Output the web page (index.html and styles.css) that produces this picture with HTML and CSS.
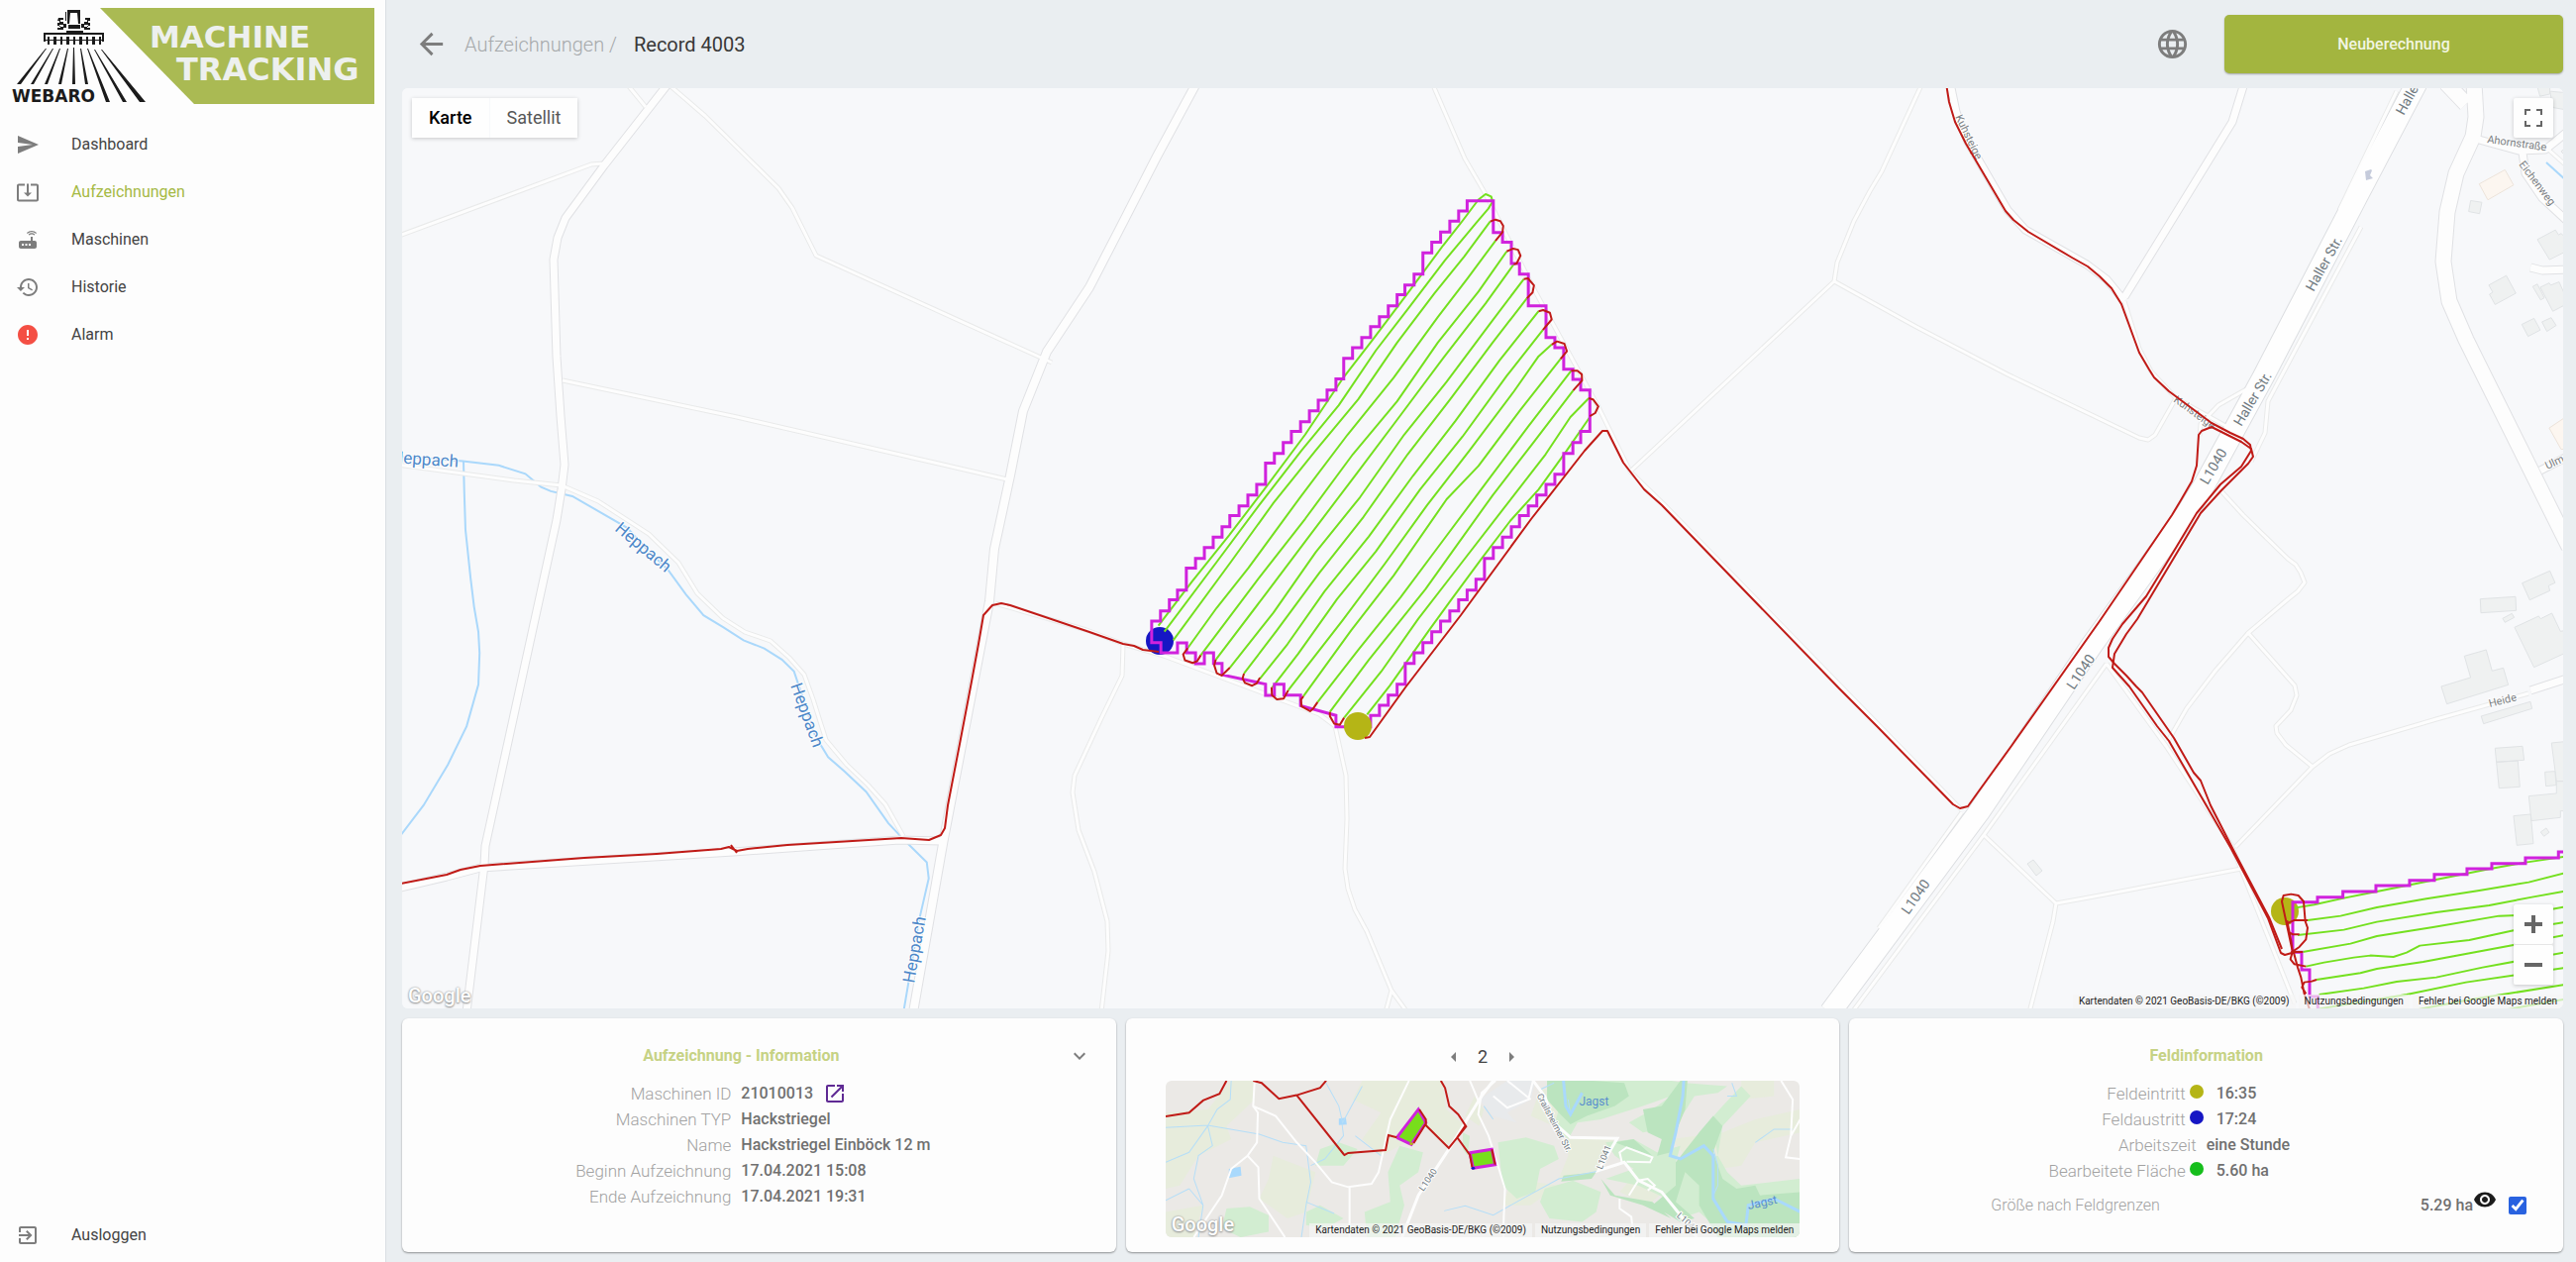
FILE: index.html
```html
<!DOCTYPE html>
<html lang="de">
<head>
<meta charset="utf-8">
<title>Record 4003 – Machine Tracking</title>
<link rel="stylesheet" href="styles.css">
</head>
<body>
<div class="app">
  <aside class="sidebar">
    <a class="logo" href="#" aria-label="Webaro Machine Tracking">
      <svg viewBox="0 0 378 106" width="378" height="106">
        <path class="logo-panel" d="M101 8H378V105H196z"/>
        <g class="logo-word">
          <text x="151" y="48">MACHINE</text>
          <text class="logo-word-wide" x="178" y="81">TRACKING</text>
        </g>
        <text class="logo-brand" x="12" y="103">WEBARO</text>
        <g class="logo-ink">
          <path d="M46 49L17 85H21L47 49zM53 49L31 85H34L54 49zM60 49L45 85H48L61 49zM68 49L59 85H62L69 49zM74 48L73 85H76L75 48zM81 49L86 85H89L82 49zM88 49L107 103H111L89 49zM95 50L124 103H128L96 50zM102 50L141 103H147L103 50z"/>
          <path fill-rule="evenodd" d="M44 33H105V42H103V35H46V42H44zM67 31H84V33H67zM68 10H81V24H79L78 13H71L70 24H68zM66 12H67V21H66zM69 25H81V29H69z"/>
          <path d="M59 18H64V20H61V22H64V25H60V27H64V30H58V28H61V26H58V23H60V21H58zM91 18H86V20H88V22H85V25H89V27H85V30H91V28H88V26H91V23H89V21H91zM64 24H67V28H64zM82 24H85V28H82z"/>
          <path d="M48 37H50V45H48zM54 37H57V45H54zM61 37H63V45H61zM67 37H70V45H67zM74 37H76V45H74zM80 37H83V45H80zM87 37H89V45H87zM93 37H96V45H93zM100 37H102V45H100zM46 40H104V41H46z"/>
        </g>
      </svg>
    </a>
    <nav class="nav">
      <a class="nav-item" href="#"><svg class="icon" viewBox="0 0 24 24"><path d="M2.01 21L23 12 2.01 3 2 10l15 2-15 2z"/></svg>Dashboard</a>
      <a class="nav-item nav-item-active" href="#"><svg class="icon" viewBox="0 0 24 24"><path d="M12 16.5l4-4h-3v-9h-2v9H8l4 4zm9-13h-6v1.99h6v14.03H3V5.49h6V3.5H3c-1.1 0-2 .9-2 2v14c0 1.1.9 2 2 2h18c1.1 0 2-.9 2-2v-14c0-1.1-.9-2-2-2z"/></svg>Aufzeichnungen</a>
      <a class="nav-item" href="#"><svg class="icon" viewBox="0 0 24 24"><path d="M20.2 5.9l.8-.8C19.6 3.7 17.8 3 16 3s-3.6.7-5 2.1l.8.8C13 4.8 14.5 4.2 16 4.2s3 .6 4.2 1.7zm-.9.8c-.9-.9-2.1-1.4-3.3-1.4s-2.4.5-3.3 1.4l.8.8c.7-.7 1.6-1 2.5-1 .9 0 1.8.3 2.5 1l.8-.8zM19 13h-2V9h-2v4H5c-1.1 0-2 .9-2 2v4c0 1.1.9 2 2 2h14c1.1 0 2-.9 2-2v-4c0-1.1-.9-2-2-2zM8 18H6v-2h2v2zm3.5 0h-2v-2h2v2zm3.5 0h-2v-2h2v2z"/></svg>Maschinen</a>
      <a class="nav-item" href="#"><svg class="icon" viewBox="0 0 24 24"><path d="M13 3c-4.97 0-9 4.03-9 9H1l3.89 3.89.07.14L9 12H6c0-3.87 3.13-7 7-7s7 3.13 7 7-3.13 7-7 7c-1.93 0-3.68-.79-4.94-2.06l-1.42 1.42C8.27 19.99 10.51 21 13 21c4.97 0 9-4.03 9-9s-4.03-9-9-9zm-1 5v5l4.28 2.54.72-1.21-3.5-2.08V8H12z"/></svg>Historie</a>
      <a class="nav-item" href="#"><svg class="icon icon-alarm" viewBox="0 0 24 24"><path d="M12 2C6.48 2 2 6.48 2 12s4.48 10 10 10 10-4.48 10-10S17.52 2 12 2zm1 15h-2v-2h2v2zm0-4h-2V7h2v6z"/></svg>Alarm</a>
    </nav>
    <button class="nav-item nav-logout" type="button"><svg class="icon" viewBox="0 0 24 24"><path d="M10.09 15.59L11.5 17l5-5-5-5-1.41 1.41L12.67 11H3v2h9.67l-2.58 2.59zM19 3H5c-1.11 0-2 .9-2 2v4h2V5h14v14H5v-4H3v4c0 1.1.89 2 2 2h14c1.1 0 2-.9 2-2V5c0-1.1-.9-2-2-2z"/></svg>Ausloggen</button>
  </aside>

  <main class="main">
    <header class="topbar">
      <button class="icon-button" type="button" aria-label="Zurück"><svg class="icon icon-large" viewBox="0 0 24 24"><path d="M20 11H7.83l5.59-5.59L12 4l-8 8 8 8 1.41-1.41L7.83 13H20v-2z"/></svg></button>
      <a class="crumb" href="#">Aufzeichnungen /</a>
      <h1 class="page-title">Record 4003</h1>
      <button class="icon-button language" type="button" aria-label="Sprache"><svg class="icon icon-large" viewBox="0 0 24 24"><path d="M11.99 2C6.47 2 2 6.48 2 12s4.47 10 9.99 10C17.52 22 22 17.52 22 12S17.52 2 11.99 2zm6.93 6h-2.95c-.32-1.25-.78-2.45-1.38-3.56 1.84.63 3.37 1.91 4.33 3.56zM12 4.04c.83 1.2 1.48 2.53 1.91 3.96h-3.82c.43-1.43 1.08-2.76 1.91-3.96zM4.26 14C4.1 13.36 4 12.69 4 12s.1-1.36.26-2h3.38c-.08.66-.14 1.32-.14 2 0 .68.06 1.34.14 2H4.26zm.82 2h2.95c.32 1.25.78 2.45 1.38 3.56-1.84-.63-3.37-1.9-4.33-3.56zm2.95-8H5.08c.96-1.66 2.49-2.93 4.33-3.56C8.81 5.55 8.35 6.75 8.03 8zM12 19.96c-.83-1.2-1.48-2.53-1.91-3.96h3.82c-.43 1.43-1.08 2.76-1.91 3.96zM14.34 14H9.66c-.09-.66-.16-1.32-.16-2 0-.68.07-1.35.16-2h4.68c.09.65.16 1.32.16 2 0 .68-.07 1.34-.16 2zm.25 5.56c.6-1.11 1.06-2.31 1.38-3.56h2.95c-.96 1.65-2.49 2.93-4.33 3.56zM16.36 14c.08-.66.14-1.32.14-2 0-.68-.06-1.34-.14-2h3.38c.16.64.26 1.31.26 2s-.1 1.36-.26 2h-3.38z"/></svg></button>
      <button class="primary-button" type="button">Neuberechnung</button>
    </header>

    <section class="map" aria-label="Karte">
      <svg class="map-canvas" viewBox="406 89 2182 929" preserveAspectRatio="xMidYMid slice">
        <defs>
          <g id="paths">
            <path d="M400 469L519 485 567 490 604 506 655 539 685 568 704 599 730 624 752 638 778 647 797 664 812 681 821 706 834 747 855 772 876 792 894 812 912 844"/>
            <path d="M568 384L744 421 1017 484"/>
            <path d="M400 239L597 166 610 165"/>
            <path d="M634 86L652 108M676 86L712 117 786 190 800 210 824 258 1062 366"/>
            <path d="M1447 86L1479 160 1500 196 1550 294 1614 411 1646 476 1680 509 1860 694 1981 818"/>
            <path d="M1647 475L1852 284 1855 265 1872 223 1888 193 1900 173 1940 86"/>
            <path d="M1852 284L1935 330 2027 378 2160 442 2169 444 2176 439 2197 402"/>
            <path d="M1005 609L1097 636 1134 650 1175 662 1332 721 1348 733 1359 783 1360 827 1358 877 1361 897 1368 918 1380 940 1405 1000 1399 1022M1405 1000L1421 1022"/>
            <path d="M1134 650L1133 682 1112 725 1085 783 1083 800 1089 838 1105 880 1118 930 1119 960 1112 1022"/>
            <path d="M2384 229L2290 405 2287 437 2273 466M2127 670L2003 843 1870 1022M1981 820L1897 937"/>
            <path d="M2003 843L2076 912 2073 930 2049 1022M2076 912L2120 904 2263 877"/>
            <path d="M2127 670L2187 753 2253 853 2317 1013"/>
            <path d="M2257 855L2335 774 2352 761 2372 752 2460 726 2553 700"/>
            <path d="M2335 774L2308 752 2299 740 2298 733 2313 717 2319 702 2317 692 2270 639 2310 605 2320 597 2327 588 2323 578 2318 570 2310 564 2265 520 2243 496"/>
            <path d="M2270 639L2237 677 2208 715 2189 748"/>
            <path d="M2145 304L2160 352 2172 375 2197 402 2260 437M2268 393L2240 409 2222 428 2221 440"/>
            <path d="M2420 92L2362 212M2572 150L2590 166"/>
          </g>
          <g id="lanes">
            <path d="M675 84L610 167 571 220 563 240 559 262 562 360 566 420 570 469 567 494 562 525 490 854 489 873 471 1022"/>
            <path d="M400 897L451 885 485 876 740 860 908 848 950 849"/>
            <path d="M2266 84L2254 123 2145 300"/>
            <path d="M1969 84L1975 113 1987 143 2027 212 2045 232 2107 267 2127 282 2145 304"/>
            <path d="M2503 141L2543 152 2570 151 2580 143 2592 133M2547 154L2550 175 2567 200 2592 223M2555 270L2567 273 2592 272M2565 475L2592 461M2555 697L2592 685"/>
          </g>
          <g id="streets">
            <path d="M1208 84L1168 158 1130 232 1100 290 1057 355 1033 415 1020 480 1004 554 999 607 952 852 922 1022"/>
          </g>
          <g id="avenues">
            <path d="M2498 84L2500 118 2497 138 2480 175 2471 214 2467 264 2473 304 2490 343 2594 552M2470 84L2490 105"/>
          </g>
          <g id="highway">
            <path d="M2440 84L2380 198 2286 379 2226 489 2207 520 2113 650 1998 820 1848 1022"/>
          </g>
        </defs>

        <rect class="ground" x="0" y="0" width="3000" height="1400"/>
        <g class="building" transform="translate(2100 0) scale(.3333 .3571)">
          <path class="shop" d="M1210 520L1288 480 1314 523 1236 565zM1422 1210L1470 1180V1270H1458z"/>
          <path d="M1184 567L1218 572 1211 604 1178 598zM1386 677L1441 650 1450 664 1458 660 1470 670V712L1423 734zM1239 806L1292 779 1321 829 1258 861 1241 832 1251 826zM1372 810L1386 803 1407 842 1396 848zM1395 812L1422 800 1427 806 1452 797 1470 835V862L1433 880zM1339 917L1376 900 1395 933 1358 951zM1400 910L1428 898 1443 920 1415 937zM1386 245H1424V266L1394 272zM1424 258L1470 262V310L1434 304zM1458 428L1470 418V440z"/>
        </g>
        <g class="building" transform="translate(2100 520) scale(.3333)">
          <path d="M1340 206L1424 169 1440 205 1420 214 1424 229 1363 257zM1213 254L1320 247 1322 289 1215 296zM1281 313L1309 298 1316 310 1288 325zM1317 340L1390 306 1396 314 1430 297 1456 352 1470 350V418L1376 461zM1165 427L1231 408 1249 472 1283 463 1298 514 1112 572 1095 519 1184 492zM1216 609L1365 565 1370 586 1223 632zM1258 706L1341 700 1346 742 1262 748zM1262 748L1327 744 1333 823 1270 827zM1429 690L1470 686V806H1444zM1409 778L1440 776 1443 818 1412 821zM1360 851L1444 843V806H1470V896H1456V916L1368 926zM1314 911L1366 906 1374 995 1324 1000zM1396 960L1413 948 1422 961 1406 973z"/>
        </g>
        <path class="building" d="M2047 872L2053 868 2062 879 2056 884z"/>
        <path class="water" d="M2571 164L2592 183"/>
        <g class="water" transform="translate(400 420) scale(.3954 .389)">
          <path d="M0 105L60 108 170 117 262 128 330 150 370 184 395 195 450 208 590 290 640 345 695 400 740 463 785 517 835 548 887 582 940 603 985 632 1016 663 1040 735 1070 830 1103 885 1145 922 1200 975 1257 1057 1300 1103 1355 1158 1360 1200 1335 1310 1295 1550"/>
          <path d="M172 118L174 200 177 295 190 420 199 495 210 560 213 615 210 697 180 805 132 905 70 1010 10 1090"/>
        </g>

        <use class="paths-edge" href="#paths"/><use class="lanes-edge" href="#lanes"/><use class="streets-edge" href="#streets"/><use class="avenues-edge" href="#avenues"/><use class="highway-edge" href="#highway"/>
        <use class="paths-fill" href="#paths"/><use class="lanes-fill" href="#lanes"/><use class="streets-fill" href="#streets"/><use class="avenues-fill" href="#avenues"/><use class="highway-fill" href="#highway"/>
        <path class="oneway" d="M2394 171L2388 173 2389 182 2396 180 2393 177 2395 172z"/>

        <g class="label-water">
          <text x="395" y="467" transform="rotate(4 395 467)">Heppach</text>
          <text x="620" y="535" transform="rotate(40 620 535)">Heppach</text>
          <text x="798" y="692" transform="rotate(70 798 692)">Heppach</text>
          <text x="923" y="993" transform="rotate(-80 923 993)">Heppach</text>
        </g>
        <g class="label-road">
          <text x="2336" y="295" transform="rotate(-61 2336 295)">Haller Str.</text>
          <text x="2263" y="431" transform="rotate(-59 2263 431)">Haller Str.</text>
          <text x="2427" y="117" transform="rotate(-61 2427 117)">Haller Str.</text>
          <text x="2229" y="490" transform="rotate(-59 2229 490)">L1040</text>
          <text x="2094" y="697" transform="rotate(-56 2094 697)">L1040</text>
          <text x="1927" y="924" transform="rotate(-55 1927 924)">L1040</text>
        </g>
        <g class="label-street">
          <text x="2194" y="405" transform="rotate(36 2194 405)">Kuhsteige</text>
          <text x="1974" y="118" transform="rotate(64 1974 118)">Kuhsteige</text>
          <text x="2511" y="144" transform="rotate(8 2511 144)">Ahornstraße</text>
          <text x="2543" y="166" transform="rotate(53 2543 166)">Eichenweg</text>
          <text x="2572" y="474" transform="rotate(-25 2572 474)">Ulm</text>
          <text x="2514" y="714" transform="rotate(-14 2514 714)">Heide</text>
        </g>

        <circle class="exit" cx="1171" cy="647" r="14"/>
        <circle class="entry" cx="2307" cy="920" r="14"/>
        <g transform="translate(1100 160) scale(.3571 .3954)">
          <g class="rows">
            <path d="M195 1193L290 1080 395 962 500 838 610 705 716 562 800 464 905 338 1000 222 1050 165 1100 105 1120 91 1136 97 1140 110 1128 128 1095 163 1070 190 1005 260 900 385 810 490 705 630 600 745 480 885 360 1030 212 1208"/>
            <path d="M1133 161L1060 250 975 345 870 470 760 615 640 745 520 880 400 1030 237 1230"/>
            <path d="M1148 210L1070 305 985 405 860 560 730 705 600 860 450 1045 360 1147 278 1250"/>
            <path d="M1180 237L1100 340 985 470 870 620 745 755 610 920 480 1070 315 1268"/>
            <path d="M1200 270L1120 370 1000 510 880 655 755 805 625 960 500 1110 357 1280"/>
            <path d="M1228 308L1130 425 1010 570 890 705 765 865 640 1005 520 1160 397 1300"/>
            <path d="M1237 357L1140 470 1020 615 900 755 775 915 650 1058 530 1205 437 1315"/>
            <path d="M1270 390L1160 515 1035 670 915 810 790 965 665 1105 560 1240 482 1328"/>
            <path d="M1282 438L1180 555 1055 710 935 845 810 1003 700 1125 590 1265 517 1350"/>
            <path d="M1307 475L1270 505 1200 595 1075 745 955 885 835 1035 715 1180 562 1358"/>
            <path d="M1332 512L1220 640 1100 785 1010 870 860 1065 740 1205 605 1373"/>
            <path d="M1362 542L1240 685 1120 830 1000 975 880 1120 760 1255 645 1388"/>
            <path d="M1368 592L1260 720 1140 860 1025 1005 950 1100 790 1280 680 1413"/>
            <path d="M1412 612L1360 660 1290 755 1170 895 1050 1035 930 1175 825 1310 720 1428"/>
            <path d="M1415 660L1350 745 1270 845 1190 925 1110 1020 1020 1130 960 1205 850 1345 785 1420"/>
          </g>
          <path class="border" d="M1142 108H1068V134H1044V160H1019V188H993V214H968V241H943V295H918V323H892V348H870V376H845V404H820V429H795V457H770V483H744V510H719V563H697V591H672V617H647V644H622V672H597V697H571V725H548V753H523V778H498V832H473V859H448V887H423V912H397V940H375V967H350V993H325V1021H300V1046H274V1102H249V1127H226V1155H201V1181H176V1236H202V1262H249V1237H275V1262H300V1290H325V1262H351V1289H375V1318L498 1342V1371H523V1342H550V1370H597V1397L697 1422V1451H795V1422H820V1396H845V1370H870V1342H893V1289H918V1262H943V1236H968V1208H993V1181H1019V1155H1044V1127H1068V1102H1093V1074H1117V1021H1142V993H1168V967H1193V940H1216V912H1241V887H1265V859H1291V832H1316V806H1341V753H1367V725H1389V697H1415V591H1389V564H1367V538H1341V483H1316V457H1291V376H1241V295H1216V268H1193V214H1168V189H1142z"/>
          <g class="track">
            <path d="M1133 161L1148 156 1162 160 1170 172 1168 188 1148 210M1180 237L1198 230 1212 233 1219 248 1208 268 1200 270M1228 308L1240 306 1257 324 1253 342 1237 357M1270 390L1283 387 1302 394 1307 411 1282 438M1307 475L1322 467 1343 473 1350 492 1332 512M1362 542L1380 542 1392 551 1393 567 1368 592M1412 612L1424 615 1439 633 1430 650 1415 658"/>
            <path d="M278 1250L265 1266 270 1281 292 1288 305 1283 315 1268M357 1280L353 1294 360 1314 374 1320 397 1300M437 1315L433 1327 440 1339 460 1346 473 1340 482 1326M515 1350L516 1370 530 1381 549 1379 562 1358M605 1373L598 1382 600 1399 624 1411 633 1404 645 1388M680 1413L680 1424 692 1443 708 1446 720 1428"/>
          </g>
        </g>
        <circle class="entry" cx="1371" cy="733" r="14"/>
        <g transform="translate(2100 520) scale(.3333)">
          <path class="rows" d="M650 1190L710 1180 800 1160 900 1140 1075 1105 1240 1072 1350 1052 1470 1034M690 1227L790 1214 900 1188 1050 1162 1210 1137 1360 1112 1470 1084M660 1272L800 1256 900 1232 1080 1203 1240 1182 1370 1157 1470 1139M675 1323L820 1298 900 1275 1070 1248 1270 1214 1330 1212 1470 1186M685 1367L740 1355 830 1340 880 1334 950 1338 990 1325 1030 1304 1180 1287 1314 1258 1470 1233M717 1407L850 1387 900 1374 1040 1353 1314 1302 1470 1272M725 1452L860 1433 960 1413 1080 1400 1220 1370 1470 1324M720 1496L990 1452 1170 1415 1470 1371M1010 1500L1180 1468 1470 1422M1280 1500L1470 1466"/>
          <path class="border" d="M1470 1020H1450V1038H1350V1055H1248V1071H1173V1088H1074V1106H999V1122H897V1140H797V1157H720V1172H645V1324H672V1377H696V1458H721V1510"/>
          <path class="track" d="M645 1325L612 1170 617 1152 640 1148 662 1152 678 1170 683 1230 690 1250 685 1285 665 1308 640 1325M628 1228L640 1290 645 1325M632 1235L650 1227H690M632 1262L645 1270H665M640 1323H675M645 1320L638 1345 650 1360 685 1367M648 1325L660 1370 670 1400 680 1450 697 1500M717 1407L703 1412 680 1415 673 1430 685 1450"/>
        </g>
        <g class="track">
          <path d="M400 893L451 883 465 878 485 874 590 866 663 862 728 857 736 855 744 859 755 857 795 853 910 846 938 848 950 843 954 836 957 813 969 751 981 688 988 650 993 621 1002 611 1011 609 1020 611 1100 638 1134 650 1145 652 1154 656 1170 658M738 853l6 8"/>
          <path d="M1378 745L1383 744 1419 694 1475 621 1546 524 1600 455 1618 435 1623 435 1630 449 1639 467 1660 494 1678 510 1765 600 1857 695 1895 733 1972 812 1979 816 1987 814 1997 800 2031 753 2120 627 2193 520 2202 505 2213 486 2218 470 2220 439 2223 435 2233 431 2263 446 2273 453 2275 461 2270 468 2243 495 2222 518 2158 625 2147 640 2135 660 2133 674 2150 693 2178 733 2190 748 2223 805 2253 857 2290 927 2303 962 2307 964 2314 962"/>
          <path d="M1965 84L1968 103 1974 123 1985 145 2025 213 2033 222 2048 234 2092 260 2108 269 2120 279 2132 291 2142 307 2160 356 2170 373 2175 381 2190 395 2233 427 2252 437 2265 443 2272 449 2273 455 2263 471 2242 489 2218 518 2197 553 2167 602 2143 630 2133 645 2129 654 2129 663 2135 670 2147 682 2157 693 2163 699 2195 745 2215 780 2222 788 2232 813 2256 860 2291 926 2304 958"/>
        </g>
      </svg>

      <div class="map-type" role="group" aria-label="Kartentyp">
        <button class="map-type-button map-type-active" type="button">Karte</button>
        <button class="map-type-button" type="button">Satellit</button>
      </div>
      <button class="map-tool map-fullscreen" type="button" aria-label="Vollbild"><svg viewBox="0 0 18 18" width="18" height="18"><path d="M0 0v6h2V2h4V0H0zm16 0h-4v2h4v4h2V0h-2zm0 16h-4v2h6v-6h-2v4zM2 12H0v6h6v-2H2v-4z"/></svg></button>
      <div class="map-zoom">
        <button class="map-tool" type="button" aria-label="Vergrößern"><svg viewBox="0 0 18 18" width="18" height="18"><path d="M18 7h-7V0H7v7H0v4h7v7h4v-7h7z"/></svg></button>
        <button class="map-tool" type="button" aria-label="Verkleinern"><svg viewBox="0 0 18 18" width="18" height="18"><path d="M0 7h18v4H0z"/></svg></button>
      </div>
      <span class="map-brand">Google</span>
      <div class="map-credits"><span>Kartendaten © 2021 GeoBasis-DE/BKG (©2009)</span><a href="#">Nutzungsbedingungen</a><a href="#">Fehler bei Google Maps melden</a></div>
    </section>

    <div class="cards">
      <section class="card">
        <div class="card-head">
          <h2 class="card-title">Aufzeichnung - Information</h2>
          <button class="icon-button card-toggle" type="button" aria-label="Einklappen"><svg class="icon" viewBox="0 0 24 24"><path d="M16.59 8.59L12 13.17 7.41 8.59 6 10l6 6 6-6z"/></svg></button>
        </div>
        <dl class="facts facts-record">
          <div class="fact"><dt>Maschinen ID</dt><dd>21010013 <a class="open-link" href="#" aria-label="Maschine öffnen"><svg class="icon" viewBox="0 0 24 24"><path d="M19 19H5V5h7V3H5c-1.11 0-2 .9-2 2v14c0 1.1.89 2 2 2h14c1.1 0 2-.9 2-2v-7h-2v7zM14 3v2h3.59l-9.83 9.83 1.41 1.41L19 6.41V10h2V3h-7z"/></svg></a></dd></div>
          <div class="fact"><dt>Maschinen TYP</dt><dd>Hackstriegel</dd></div>
          <div class="fact"><dt>Name</dt><dd>Hackstriegel Einböck 12 m</dd></div>
          <div class="fact"><dt>Beginn Aufzeichnung</dt><dd>17.04.2021 15:08</dd></div>
          <div class="fact"><dt>Ende Aufzeichnung</dt><dd>17.04.2021 19:31</dd></div>
        </dl>
      </section>

      <section class="card">
        <div class="pager">
          <button class="icon-button" type="button" aria-label="Vorheriges Feld"><svg class="icon" viewBox="0 0 24 24"><path d="M14 7l-5 5 5 5V7z"/></svg></button>
          <span class="pager-value">2</span>
          <button class="icon-button" type="button" aria-label="Nächstes Feld"><svg class="icon" viewBox="0 0 24 24"><path d="M10 17l5-5-5-5v10z"/></svg></button>
        </div>
        <div class="minimap">
          <svg class="map-canvas" viewBox="0 0 640 158" preserveAspectRatio="xMidYMid slice">
            <rect class="mini-ground" width="640" height="158"/>
            <g transform="scale(.472 .3333) translate(-100 -243)">
              <path class="mini-meadow" d="M100 340L190 330 240 243H290V300L230 380 240 420 170 470 130 560 100 570zM520 243H690L700 330 740 380 700 440 660 380 600 440 560 470 520 420 560 340 500 300zM570 330L600 360 560 400zM330 470L420 520 400 640 360 660 300 600 320 540zM900 270H930L960 400 880 350zM960 420L1060 415 1020 520 940 540 960 470zM1180 420L1290 400 1360 360 1456 330V400L1360 430 1330 500 1240 520zM1330 243H1400V290L1330 300zM840 540L940 560 880 620 820 620zM1120 500L1180 560 1130 620 1070 580zM100 640L180 620 160 717H100zM760 290L780 330 770 380 740 350z"/>
              <path class="mini-wood" d="M915 243H1180L1210 250 1300 260 1280 280 1230 290 1190 380 1120 400 1090 370 1140 330 1180 290 1120 320 1030 360 980 370 960 420 930 380 940 330 915 290zM1040 430L1100 420 1150 460 1200 440 1190 490 1280 470 1275 430 1230 450 1240 400 1290 320 1330 260 1350 290 1290 380 1280 470 1300 520 1330 560 1456 540V717H1300L1240 640 1200 660 1170 600 1110 560 1040 540 1100 510 1060 470zM430 450L470 430 510 450 480 500 420 500zM600 440L650 460 640 520 600 560 610 620 590 717H530L525 640 580 610 575 520zM810 430L870 415 930 440 940 480 900 510 890 580 850 600 820 560zM910 570L970 545 1030 580 1020 640 990 670 920 660 900 610zM230 630L280 625 320 650 320 700 260 717 220 690zM400 640L430 620 480 660 440 690 400 680zM735 400L750 410 745 470 735 450z"/>
              <path class="mini-wood-deep" d="M915 243H1010L1080 250 1090 290 1060 320 1000 350 965 375 940 340 915 300zM1120 330L1160 320 1200 243H1215L1210 330 1190 400 1180 460 1150 470 1160 420 1130 400zM1190 490L1240 400 1270 350 1290 380 1270 460 1290 540 1320 570 1360 560 1370 590 1456 580V717H1280L1240 620 1240 560 1210 520 1190 610 1230 660 1200 670 1140 620 1190 560zM1030 540L1060 590 1140 610 1180 660 1120 620 1050 590zM950 530L1020 520 1010 540 945 548zM1060 430L1100 420 1140 470 1080 440z"/>
              <path class="mini-town" d="M770 300L830 243H890L880 300 830 340 850 370 800 350z"/>
              <path class="mini-pond" d="M235 510L260 503 262 530 235 538zM470 358L485 355 487 376 470 377z"/>
              <path class="mini-water" d="M240 243L238 300 210 330 190 380 200 440 170 470 160 540 180 620 170 717M100 385L190 378 300 405 350 430 400 440 410 550 400 620 390 717M100 490L150 460 190 380M150 570L100 605M440 243L470 320 478 370 520 260M477 375L480 410 440 480 410 500M505 410L560 470M695 637L740 622 800 650 850 610 940 540 1030 515M780 320L800 360M960 300L965 345M1270 590L1280 560 1280 500 1270 450M150 570L180 620M400 610L460 645M900 270L930 250M1360 430L1400 390 1440 390M1300 290L1320 290 1310 250"/>
              <path class="mini-river" d="M1207 243L1205 290 1190 400 1178 470 1200 480 1250 440 1270 470 1270 600 1300 670 1340 680 1345 620 1400 600 1456 640M950 243L955 320 965 345 990 280"/>
              <path class="mini-road" d="M290 243L287 320 335 350 380 430 420 490 455 550 490 565 540 555 555 520 580 360 620 243M287 320L297 340 295 430 275 470 298 505 300 600 355 717M275 470L240 510 220 590 160 717M493 565V717M805 243L775 280 768 345 790 410 810 500 825 570 822 675 822 717M750 243L770 310M885 243L875 300 830 325 800 290M830 243L880 300M1415 243L1440 300 1436 410 1425 475 1456 480M1456 360L1436 410M1090 590L1110 545 1130 540 1145 560 1130 575M1070 600L1070 630 1095 655 1100 717M1075 490L1070 460 1085 445 1140 475 1135 490 1085 488"/>
              <path class="mini-main" d="M605 717L640 590 710 440 740 370 775 290 800 243M885 243L910 290 930 370 965 415 1065 418 1025 515 1080 490 1110 545 1160 580 1200 650 1235 717"/>
              <path class="mini-field" d="M640 330L656 370 625 436 594 415zM750 461L797 451 804 497 757 508z"/>
              <path class="mini-border" d="M594 415L640 330 656 370 625 436 594 415M750 461L797 451 804 497 757 508z"/>
              <path class="mini-track" d="M100 351L150 340 180 303 215 283 230 243M287 243L305 250 342 298 380 287 430 265 443 243M380 287L480 465 482 468 490 462 570 453 576 408 594 415M642 330L656 360V378L705 447 742 382 725 345 706 320 697 265 688 243M740 380L723 415 750 468 755 505M797 451L804 497M630 432L655 375"/>
              <circle class="exit" cx="757" cy="508" r="4"/><circle class="entry" cx="625" cy="434" r="4"/>
            </g>
            <g class="label-river">
              <text x="417" y="25">Jagst</text><text x="588" y="130" transform="rotate(-12 588 130)">Jagst</text>
            </g>
            <g class="label-mini">
              <text x="374" y="15" transform="rotate(62 374 15)">Crailsheimer Str.</text>
              <text x="260" y="112" transform="rotate(-56 260 112)">L1040</text>
              <text x="440" y="90" transform="rotate(-68 440 90)">L1041</text>
              <text x="515" y="137" transform="rotate(42 515 137)">L104</text>
            </g>
          </svg>
          <span class="map-brand">Google</span>
          <div class="map-credits"><span>Kartendaten © 2021 GeoBasis-DE/BKG (©2009)</span><a href="#">Nutzungsbedingungen</a><a href="#">Fehler bei Google Maps melden</a></div>
        </div>
      </section>

      <section class="card">
        <div class="card-head"><h2 class="card-title">Feldinformation</h2></div>
        <dl class="facts facts-field">
          <div class="fact fact-dotted"><dt>Feldeintritt</dt><dd><i class="dot dot-entry"></i>16:35</dd></div>
          <div class="fact fact-dotted"><dt>Feldaustritt</dt><dd><i class="dot dot-exit"></i>17:24</dd></div>
          <div class="fact"><dt>Arbeitszeit</dt><dd>eine Stunde</dd></div>
          <div class="fact fact-dotted"><dt>Bearbeitete Fläche</dt><dd><i class="dot dot-area"></i>5.60 ha</dd></div>
        </dl>
        <div class="boundary">
          <label class="boundary-label" for="show-boundary">Größe nach Feldgrenzen</label>
          <span class="boundary-value">5.29 ha</span>
          <svg class="icon boundary-eye" viewBox="0 0 24 24"><path d="M12 4.5C7 4.5 2.73 7.61 1 12c1.73 4.39 6 7.5 11 7.5s9.27-3.11 11-7.5c-1.73-4.39-6-7.5-11-7.5zM12 17c-2.76 0-5-2.24-5-5s2.24-5 5-5 5 2.24 5 5-2.24 5-5 5zm0-8c-1.66 0-3 1.34-3 3s1.34 3 3 3 3-1.34 3-3-1.34-3-3-3z"/></svg>
          <input class="boundary-check" id="show-boundary" type="checkbox" checked>
        </div>
      </section>
    </div>
  </main>
</div>
</body>
</html>
```

FILE: styles.css
```css
* { box-sizing: border-box; }

body {
  margin: 0;
  background: #eaeef1;
  color: #444;
  font: 16px/26px Roboto, "Liberation Sans", sans-serif;
}

a { color: inherit; text-decoration: none; }

button {
  border: 0;
  padding: 0;
  background: none;
  color: inherit;
  font: inherit;
  cursor: pointer;
}

h1, h2, dl, dd { margin: 0; }

.app { display: flex; min-height: 100vh; }

.icon { display: block; flex: none; width: 24px; height: 24px; fill: #7d7d7d; }
.icon-large { width: 35px; height: 35px; }
.icon-alarm { fill: #f44f44; }
.icon-button { display: block; flex: none; }

/* Sidebar */
.sidebar {
  display: flex;
  flex: none;
  flex-direction: column;
  width: 390px;
  border-right: 1px solid #d9dfe3;
  background: #fdfdfd;
}
.logo { display: block; height: 122px; }
.logo svg { display: block; }
.logo-panel { fill: #aaba53; }
.logo-word { fill: #edf0ee; font: 700 31px "DejaVu Sans", sans-serif; }
.logo-word-wide { font-size: 32px; }
.logo-brand { fill: #1b1b1b; font: 700 17px "DejaVu Sans", sans-serif; }
.logo-ink { fill: #1b1b1b; }
.nav { flex: 1; }
.nav-item { display: flex; align-items: center; gap: 32px; height: 48px; padding-left: 16px; }
.nav-item-active { color: #a5b944; }
.nav-logout { width: 100%; margin-bottom: 3px; }

/* Main column */
.main {
  display: flex;
  flex: 1;
  flex-direction: column;
  min-width: 0;
  padding: 0 13px 10px 16px;
}
.topbar { display: flex; align-items: center; height: 89px; padding-left: 12px; }
.crumb { margin: 0 17px 0 16px; color: #a6a9ab; font-size: 20px; font-weight: 300; }
.page-title { color: #383838; font-size: 20px; font-weight: 400; }
.language { margin: 0 35px 0 auto; }
.primary-button {
  width: 342px;
  height: 59px;
  border-radius: 5px;
  background: #a3b53f;
  box-shadow: 0 1px 2px rgba(0, 0, 0, .3);
  color: #f2f5e2;
  font-weight: 500;
}

/* Map */
.map {
  position: relative;
  flex: 1;
  min-height: 320px;
  border-radius: 6px;
  overflow: hidden;
  background: #f7f8fa;
}
.map-canvas { position: absolute; inset: 0; display: block; width: 100%; height: 100%; }
.map-canvas path { vector-effect: non-scaling-stroke; }
.ground { fill: #f7f8fa; }
.building { fill: #eff1f1; stroke: #e0e3e5; }
.building .shop { fill: #fcf6f0; stroke: #ece3da; }
.water { fill: none; stroke: #aad8fb; stroke-width: 2; }
.map-canvas use { fill: none; stroke-linejoin: round; }
.paths-edge { stroke: #e9eaea; stroke-width: 5; }
.paths-fill { stroke: #fdfdfd; stroke-width: 3; }
.lanes-edge { stroke: #e0e1e4; stroke-width: 9; }
.lanes-fill { stroke: #fdfdfd; stroke-width: 7; }
.streets-edge { stroke: #e0e1e4; stroke-width: 10; }
.streets-fill { stroke: #fdfdfd; stroke-width: 8; }
.avenues-edge { stroke: #e0e1e4; stroke-width: 17; }
.avenues-fill { stroke: #fdfdfd; stroke-width: 15; }
.highway-edge { stroke: #dcdee1; stroke-width: 23; }
.highway-fill { stroke: #fefefe; stroke-width: 21; }
.oneway { fill: #c5cbdb; }
.track { fill: none; stroke: #c01b17; stroke-width: 2; stroke-linejoin: round; }
.rows { fill: none; stroke: #74e01f; stroke-width: 2; stroke-linejoin: round; }
.border { fill: none; stroke: #d022dd; stroke-width: 3; }
.entry { fill: #b5b516; }
.exit { fill: #1616c4; }
.label-water, .label-road, .label-street { stroke: #fdfdfd; stroke-width: 2; paint-order: stroke; }
.label-water { fill: #4d88c9; font-size: 17px; }
.label-road { fill: #6f7980; font-size: 14px; }
.label-street { fill: #7b8083; font-size: 11px; }

.map-type { position: absolute; top: 10px; left: 10px; display: flex; gap: 1px; box-shadow: 0 1px 4px rgba(0, 0, 0, .2); }
.map-type-button { height: 40px; padding: 0 17px; background: #fefefe; color: #565656; font-size: 18px; }
.map-type-active { color: #000; font-weight: 500; }
.map-tool {
  display: grid;
  place-items: center;
  width: 40px;
  height: 40px;
  border-radius: 2px;
  background: #fefefe;
  box-shadow: 0 1px 4px rgba(0, 0, 0, .2);
  fill: #666;
}
.map-fullscreen { position: absolute; top: 10px; right: 10px; }
.map-zoom {
  position: absolute;
  right: 10px;
  bottom: 24px;
  display: grid;
  gap: 1px;
  background: #e6e6e6;
  box-shadow: 0 1px 4px rgba(0, 0, 0, .2);
}
.map-zoom .map-tool { box-shadow: none; }
.map-brand {
  position: absolute;
  bottom: 0;
  left: 6px;
  color: #fefefe;
  font-size: 20px;
  font-weight: 500;
  text-shadow: 0 0 2px #888, 0 1px 2px #999;
}
.map-credits {
  position: absolute;
  right: 0;
  bottom: 0;
  display: flex;
  gap: 3px;
  color: #222;
  font-size: 10px;
  line-height: 14px;
}
.map-credits > * { padding: 0 6px; background: rgba(245, 245, 245, .7); }

/* Cards */
.cards { display: grid; grid-template-columns: repeat(3, 1fr); gap: 10px; margin-top: 10px; }
.card {
  min-height: 236px;
  padding: 25px 25px 14px;
  border-radius: 6px;
  background: #fdfdfd;
  box-shadow: 0 1px 2px rgba(0, 0, 0, .4);
}
.card-head { display: flex; align-items: center; }
.card-title { flex: 1; color: #c6d284; font-size: 16px; font-weight: 700; text-align: center; }
.card-toggle { margin-left: 12px; }
.facts { margin-top: 12px; }
.facts-record { padding-right: 46px; }
.facts-field { padding-right: 10px; }
.fact { display: grid; grid-template-columns: 1fr 1fr; column-gap: 10px; }
.fact dt, .boundary-label { color: #a2a2a2; font-weight: 300; }
.fact dt { font-size: 17px; text-align: right; }
.fact dd { display: flex; align-items: center; color: #707070; font-weight: 500; }
.fact-dotted { column-gap: 4px; grid-template-columns: 1fr calc(50% + 12px); }
.dot { width: 14px; height: 14px; margin: 0 13px 4px 0; border-radius: 50%; }
.dot-entry { background: #b5b516; }
.dot-exit { background: #1616c4; }
.dot-area { background: #16be1c; }
.open-link { margin-left: 10px; }
.open-link .icon { fill: #5f2a94; }
.boundary { display: flex; align-items: center; height: 40px; padding: 4px 12px 0 118px; }
.boundary-value { margin-left: auto; color: #707070; font-weight: 500; }
.boundary-eye { align-self: flex-start; margin-right: 12px; fill: #1c1c1c; }
.boundary-check { width: 18px; height: 18px; margin: 0; accent-color: #2962e0; }

.pager { display: flex; align-items: center; justify-content: center; gap: 12px; height: 28px; }
.pager-value { font-size: 18px; }
.minimap { position: relative; height: 158px; margin: 10px 15px 0; border-radius: 6px; overflow: hidden; }
.mini-ground { fill: #ebe9e6; }
.mini-meadow { fill: #e7ecdc; }
.mini-wood { fill: #d2edd1; }
.mini-wood-deep { fill: #bbe4bf; }
.mini-town { fill: #e8eaec; }
.mini-pond { fill: #a9d9fc; }
.mini-water { fill: none; stroke: #b5def8; stroke-width: 1; }
.mini-river { fill: none; stroke: #a9d9fc; stroke-width: 3; }
.mini-road { fill: none; stroke: #fdfdfd; stroke-width: 2; }
.mini-main { fill: none; stroke: #fdfdfd; stroke-width: 3; }
.mini-field { fill: #78de1b; }
.mini-border { fill: none; stroke: #d022dd; stroke-width: 3; }
.mini-track { fill: none; stroke: #c01b17; stroke-width: 2; }
.label-river { fill: #5a8fce; font-size: 12px; }
.label-mini { fill: #6f7980; font-size: 9px; stroke: #fdfdfd; stroke-width: 2; paint-order: stroke; }
```
